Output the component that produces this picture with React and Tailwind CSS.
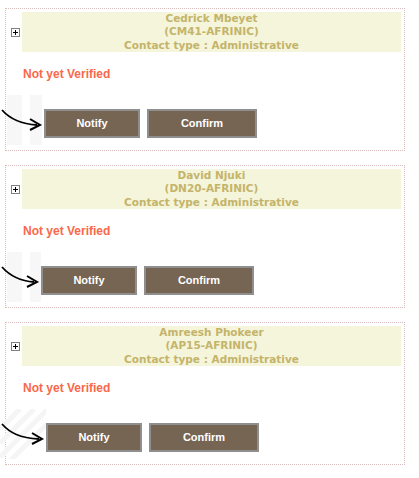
import React from 'react';

const contacts = [
  { name: 'Cedrick Mbeyet', handle: 'CM41-AFRINIC', arrowWidth: 44, stripes: 'vertical' },
  { name: 'David Njuki', handle: 'DN20-AFRINIC', arrowWidth: 41, stripes: 'vertical' },
  { name: 'Amreesh Phokeer', handle: 'AP15-AFRINIC', arrowWidth: 46, stripes: 'diagonal' },
];

const PlusBox = () => (
  <div className="w-[9px] h-[9px] border border-[#808080] bg-white flex items-center justify-center">
    <svg width="7" height="7" viewBox="0 0 7 7">
      <path d="M1 3.5h5M3.5 1v5" stroke="#000" strokeWidth="1" />
    </svg>
  </div>
);

const ArrowPic = ({ width, stripes }) => (
  <svg width={width} height="50" viewBox={`0 0 ${width} 50`} className="block">
    {stripes === 'vertical' ? (
      <g fill="#f7f7f7">
        <rect x="7" y="0" width="15" height="50" />
        <rect x="30" y="0" width="12" height="50" />
      </g>
    ) : (
      <g stroke="#f5f5f5" strokeWidth="5">
        <path d="M0 20 L20 0" />
        <path d="M0 34 L34 0" />
        <path d="M0 48 L48 0" />
        <path d="M10 52 L52 10" />
      </g>
    )}
    <path
      d={`M2 15 C 10 24, 20 29, ${width - 7} 30`}
      stroke="#000"
      strokeWidth="1.8"
      fill="none"
    />
    <path
      d={`M${width - 14} 24 L${width - 4} 30 L${width - 14} 35`}
      stroke="#000"
      strokeWidth="2"
      fill="none"
    />
  </svg>
);

const ContactCard = ({ contact }) => (
  <div className="w-[400px] ml-[5px] border border-dotted border-[#d9bcbc] pt-[3px] pb-[5px]">
    <div className="flex items-center">
      <div className="w-[16px] flex justify-center pl-[3px]">
        <PlusBox />
      </div>
      <div
        className="w-[379px] h-[40px] bg-[#f5f5dc] text-[#c4b46a] font-bold text-[10.5px] leading-[13.4px] text-center flex flex-col justify-center"
        style={{ fontFamily: 'Tahoma, "DejaVu Sans", sans-serif' }}
      >
        <div>{contact.name}</div>
        <div>({contact.handle})</div>
        <div>Contact type : Administrative</div>
      </div>
    </div>
    <div
      className="h-[43px] flex items-center pl-[17px] text-[12px] font-bold text-[#f9684a]"
      style={{ fontFamily: '"Liberation Sans", Arial, sans-serif' }}
    >
      Not yet Verified
    </div>
    <div className="flex items-start -ml-[6px] h-[50px]">
      <ArrowPic width={contact.arrowWidth} stripes={contact.stripes} />
      <div
        className="flex gap-[7px] mt-[14px] text-white text-[11px] font-bold"
        style={{ fontFamily: '"Liberation Sans", Arial, sans-serif' }}
      >
        <button className="w-[96px] h-[29px] bg-[#776554] border-2 border-[#8f8f8f]">Notify</button>
        <button className="w-[110px] h-[29px] bg-[#776554] border-2 border-[#8f8f8f]">Confirm</button>
      </div>
    </div>
  </div>
);

export default function App() {
  return (
    <div className="w-[419px] h-[478px] bg-white pt-[8px] flex flex-col gap-[14px] overflow-hidden">
      {contacts.map((c) => (
        <ContactCard key={c.handle} contact={c} />
      ))}
    </div>
  );
}
